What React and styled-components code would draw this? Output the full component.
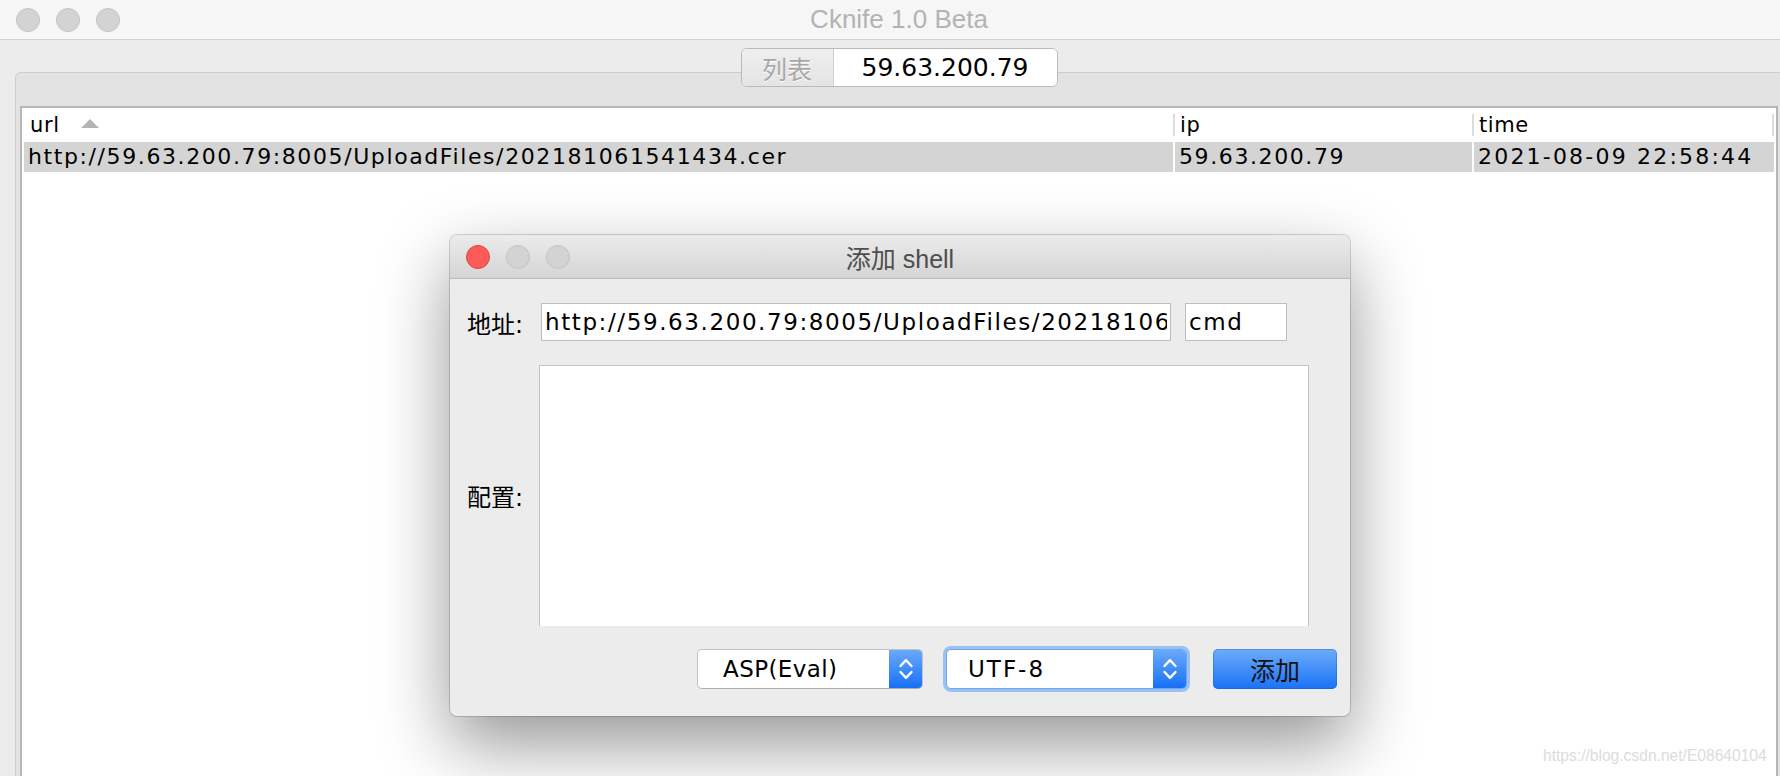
import React from "react"
import styled, { createGlobalStyle } from "styled-components"

const GlobalStyle = createGlobalStyle`
    html, body {
        margin: 0;
        padding: 0;
        background: #ececec;
    }
    body {
        font-family: "DejaVu Sans", "Noto Sans CJK SC", sans-serif;
        color: #000;
    }
`

const Screen = styled.div`
    position: relative;
    width: 1780px;
    height: 776px;
    overflow: hidden;
    background: #ececec;
`
const Window = styled.div`
    width: 1798px;
    height: 776px;
    display: flex;
    flex-direction: column;
    background: #ececec;
`
const TitleBar = styled.div`
    flex: none;
    height: ${p => p.$h}px;
    display: grid;
    grid-template-columns: 1fr auto 1fr;
    align-items: center;
    background: ${p => p.$bg};
    border-bottom: 1px solid ${p => p.$line};
`
const Lights = styled.div`
    display: flex;
    gap: 16px;
    padding-left: 16px;
`
const Light = styled.span`
    width: 22px;
    height: 22px;
    border-radius: 50%;
    background: ${p => (p.$close ? "#fc5b57" : "#d3d3d3")};
    border: 1px solid ${p => (p.$close ? "#e0443e" : "#c2c2c2")};
`
const WindowTitle = styled.div`
    font-family: "Liberation Sans", "Noto Sans CJK SC", sans-serif;
    font-size: ${p => p.$size}px;
    color: ${p => p.$color};
    white-space: nowrap;
`
const TabArea = styled.div`
    flex: 1;
    display: flex;
    flex-direction: column;
    padding-top: 32px;
    min-height: 0;
`
const TabPanel = styled.div`
    flex: 1;
    margin: 0 15px;
    padding: 0 4px;
    display: flex;
    flex-direction: column;
    background: #e3e3e3;
    border: 1px solid #cdcdcd;
    border-bottom: none;
    border-top-left-radius: 6px;
    border-top-right-radius: 6px;
    min-height: 0;
`
const Segmented = styled.div`
    align-self: center;
    margin-top: -25px;
    display: flex;
    height: 37px;
    border: 1px solid #b9b9b9;
    border-radius: 6px;
    overflow: hidden;
    background: #fff;
`
const Segment = styled.div`
    width: ${p => p.$w}px;
    display: flex;
    align-items: center;
    justify-content: center;
    font-size: 25px;
    color: ${p => (p.$dim ? "#a8a8a8" : "#000")};
    background: ${p => (p.$dim ? "linear-gradient(#efefef, #e4e4e4)" : "#fff")};
    text-shadow: ${p => (p.$dim ? "0 1px 0 #fff" : "none")};
    border-right: ${p => (p.$dim ? "1px solid #cfcfcf" : "none")};
`
const Table = styled.div`
    flex: 1;
    margin-top: 19px;
    background: #fff;
    border: 2px solid #b6b6b6;
    border-bottom: none;
    display: flex;
    flex-direction: column;
`
const Row = styled.div`
    display: grid;
    grid-template-columns: 1149px 297px 1fr;
    column-gap: 2px;
    padding: 0 2px;
    height: ${p => p.$h}px;
    align-items: ${p => (p.$header ? "center" : "stretch")};
`
const HeaderCell = styled.div`
    height: 22px;
    display: flex;
    align-items: center;
    font-size: 21px;
    letter-spacing: 0.6px;
    padding-left: ${p => (p.$divider ? 5 : 6)}px;
    margin-left: ${p => (p.$divider ? -2 : 0)}px;
    border-left: ${p => (p.$divider ? "2px solid #dddddd" : "none")};
    border-right: ${p => (p.$last ? "2px solid #dddddd" : "none")};
`
const SortArrow = styled.svg`
    margin-left: 21px;
    margin-top: -4px;
`
const DataCell = styled.div`
    background: #d4d4d4;
    padding-left: 4px;
    font-size: 22px;
    letter-spacing: ${p => p.$ls || 1.6}px;
    line-height: 30px;
    white-space: nowrap;
    overflow: hidden;
`

const Dialog = styled.div`
    position: absolute;
    left: 450px;
    top: 235px;
    width: 900px;
    height: 481px;
    box-sizing: border-box;
    display: flex;
    flex-direction: column;
    border-radius: 7px;
    overflow: hidden;
    background: #ececec;
    box-shadow: 0 0 0 1px rgba(0, 0, 0, 0.16), 0 28px 70px rgba(0, 0, 0, 0.42);
`
const DialogBody = styled.div`
    flex: 1;
    display: flex;
    flex-direction: column;
    padding: 24px 13px 27px 17px;
`
const FieldRow = styled.div`
    display: flex;
    align-items: center;
    margin-top: ${p => p.$mt || 0}px;
`
const Label = styled.div`
    width: ${p => p.$w}px;
    flex: none;
    font-size: 24px;
    white-space: nowrap;
`
const TextInput = styled.input`
    width: ${p => p.$w}px;
    height: 38px;
    box-sizing: border-box;
    margin-left: ${p => p.$ml || 0}px;
    padding: 0 3px;
    border: 1px solid #bebebe;
    background: #fff;
    font-family: "DejaVu Sans", sans-serif;
    font-size: 23px;
    letter-spacing: 1.6px;
    color: #000;
    outline: none;
`
const TextArea = styled.textarea`
    width: 770px;
    height: 261px;
    box-sizing: border-box;
    border: 1px solid #c4c4c4;
    border-bottom: none;
    background: #fff;
    resize: none;
    outline: none;
    margin: 0;
`
const ButtonRow = styled.div`
    display: flex;
    justify-content: flex-end;
    align-items: center;
    margin-top: 23px;
`
const Select = styled.div`
    width: ${p => p.$w}px;
    height: 40px;
    box-sizing: border-box;
    margin-left: ${p => p.$ml || 0}px;
    display: flex;
    border: 1px solid ${p => (p.$focused ? "#6fa6ec" : "#c3c3c3")};
    border-bottom-color: ${p => (p.$focused ? "#6fa6ec" : "#acacac")};
    border-radius: 5px;
    overflow: hidden;
    background: #fff;
    box-shadow: ${p => (p.$focused ? "0 0 0 3px #98c2f4" : "none")};
`
const SelectValue = styled.div`
    flex: 1;
    padding-left: ${p => p.$pl || 25}px;
    font-size: 23px;
    letter-spacing: ${p => p.$ls || 0.4}px;
    line-height: 38px;
    white-space: nowrap;
`
const Stepper = styled.div`
    width: 33px;
    display: flex;
    align-items: center;
    justify-content: center;
    background: linear-gradient(#6aa9f9, #1670f6);
`
const AddButton = styled.button`
    width: 124px;
    height: 40px;
    margin-left: 26px;
    border: none;
    border-radius: 5px;
    background: linear-gradient(#6dacf9, #1a72f6);
    box-shadow: inset 0 0 0 1px rgba(20, 90, 200, 0.35);
    font-family: "Noto Sans CJK SC", sans-serif;
    font-size: 25px;
    color: #111;
    padding: 0;
`
const Watermark = styled.div`
    position: absolute;
    left: 1543px;
    top: 747px;
    font-family: "Liberation Sans", sans-serif;
    font-size: 15.6px;
    color: #dcdcdc;
    white-space: nowrap;
`

const Chevrons = () => (
    <svg width="16" height="24" viewBox="0 0 16 24">
        <path d="M2.5 9 L8 3.2 L13.5 9 M2.5 15 L8 20.8 L13.5 15" fill="none" stroke="#fff" strokeWidth="2.4" strokeLinecap="round" strokeLinejoin="round" />
    </svg>
)

const TrafficLights = ({ active }) => (
    <Lights>
        <Light $close={active} />
        <Light />
        <Light />
    </Lights>
)

const rows = [
    { url: "http://59.63.200.79:8005/UploadFiles/202181061541434.cer", ip: "59.63.200.79", time: "2021-08-09 22:58:44" },
]

const App = () => {
    return (
        <Screen>
            <GlobalStyle />
            <Window>
                <TitleBar $h={39} $bg="#f6f6f6" $line="#d2d2d2">
                    <TrafficLights />
                    <WindowTitle $size={26} $color="#b3b3b3">Cknife 1.0 Beta</WindowTitle>
                    <div />
                </TitleBar>
                <TabArea>
                    <TabPanel>
                        <Segmented>
                            <Segment $w={91} $dim>列表</Segment>
                            <Segment $w={223}>59.63.200.79</Segment>
                        </Segmented>
                        <Table>
                            <Row $h={34} $header>
                                <HeaderCell>
                                    url
                                    <SortArrow width="18" height="9" viewBox="0 0 18 9">
                                        <polygon points="9,0 18,9 0,9" fill="#b5b5b5" />
                                    </SortArrow>
                                </HeaderCell>
                                <HeaderCell $divider>ip</HeaderCell>
                                <HeaderCell $divider $last>time</HeaderCell>
                            </Row>
                            {rows.map(r => (
                                <Row $h={30} key={r.url}>
                                    <DataCell>{r.url}</DataCell>
                                    <DataCell>{r.ip}</DataCell>
                                    <DataCell $ls={2.2}>{r.time}</DataCell>
                                </Row>
                            ))}
                        </Table>
                    </TabPanel>
                </TabArea>
            </Window>

            <Dialog>
                <TitleBar $h={43} $bg="linear-gradient(#ebebeb, #d5d5d5)" $line="#b9b9b9">
                    <TrafficLights active />
                    <WindowTitle $size={25} $color="#4d4d4d">添加 shell</WindowTitle>
                    <div />
                </TitleBar>
                <DialogBody>
                    <FieldRow>
                        <Label $w={74}>地址:</Label>
                        <TextInput $w={630} readOnly defaultValue="http://59.63.200.79:8005/UploadFiles/202181061541434.cer" />
                        <TextInput $w={102} $ml={14} readOnly defaultValue="cmd" />
                    </FieldRow>
                    <FieldRow $mt={24}>
                        <Label $w={72}>配置:</Label>
                        <TextArea readOnly />
                    </FieldRow>
                    <ButtonRow>
                        <Select $w={226}>
                            <SelectValue>ASP(Eval)</SelectValue>
                            <Stepper><Chevrons /></Stepper>
                        </Select>
                        <Select $w={241} $ml={23} $focused>
                            <SelectValue $ls={2} $pl={21}>UTF-8</SelectValue>
                            <Stepper><Chevrons /></Stepper>
                        </Select>
                        <AddButton>添加</AddButton>
                    </ButtonRow>
                </DialogBody>
            </Dialog>

            <Watermark>https://blog.csdn.net/E08640104</Watermark>
        </Screen>
    )
}

export default App
